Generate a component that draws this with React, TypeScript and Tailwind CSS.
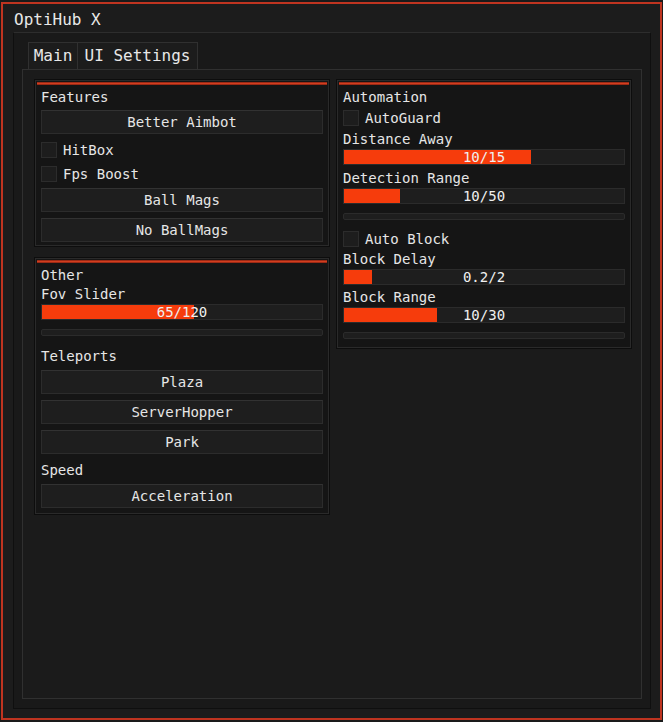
import React from "react";

const font = { fontFamily: '"DejaVu Sans Mono", "Liberation Mono", monospace' };

function Panel({ children, pb = "pb-[3px]" }: { children: React.ReactNode; pb?: string }) {
  return (
    <div className="flex flex-col border border-[#2a2a2a] bg-[#151515] outline outline-1 outline-[#0d0d0d]">
      <div className="mx-[1px] mt-[1px] h-[3px] bg-[#d23e1f] border-y border-[#9c2a16]" />
      <div className={"flex flex-col px-[5px] pt-[3px] " + pb}>{children}</div>
    </div>
  );
}

function Label({ text, className = "" }: { text: string; className?: string }) {
  return (
    <div className={"h-[18px] leading-[18px] text-[14px] text-[#e6e6e6] " + className}>{text}</div>
  );
}

function Button({ text, className = "" }: { text: string; className?: string }) {
  return (
    <div
      className={
        "h-[24px] flex items-center justify-center bg-[#1e1e1e] border border-[#2c2c2c] border-t-[#323232] text-[14px] text-[#e6e6e6] " +
        className
      }
    >
      {text}
    </div>
  );
}

function Check({ text, className = "" }: { text: string; className?: string }) {
  return (
    <div className={"h-[22px] flex items-center gap-[6px] " + className}>
      <div className="w-[16px] h-[16px] bg-[#1d1d1d] border border-[#2c2c2c]" />
      <span className="text-[14px] text-[#e6e6e6]">{text}</span>
    </div>
  );
}

function Slider({ value, max, text, className = "" }: { value: number; max: number; text: string; className?: string }) {
  const pct = (value / max) * 100;
  return (
    <div className={"relative h-[16px] bg-[#1e1e1e] border border-[#2b2b2b] " + className}>
      <div className="absolute left-0 top-0 bottom-0 bg-[#f63c0c]" style={{ width: pct + "%" }} />
      <div className="absolute inset-0 flex items-center justify-center text-[14px] leading-none text-[#f0f0f0]">
        {text}
      </div>
    </div>
  );
}

function Bar({ className = "" }: { className?: string }) {
  return <div className={"h-[7px] bg-[#1e1e1e] border border-[#2b2b2b] rounded-[2px] " + className} />;
}

export default function App() {
  return (
    <div className="w-[663px] h-[722px] bg-[#1a1a1a] pl-[1px] pt-[2px]" style={font}>
      <div className="w-[661px] h-[718px] border-2 border-[#bf3420] bg-[#1c1c1c] flex flex-col">
        <div className="h-[28px] flex items-center pl-[11px] pt-[3px] text-[16px] text-[#e8e8e8]">OptiHub X</div>
        <div className="ml-[10px] w-[638px] h-[677px] border border-[#0f0f0f] border-t-[#2d2d2d] bg-[#191919] flex flex-col">
          <div className="flex pl-[14px] pt-[9px]">
            <div className="h-[27px] w-[50px] flex items-center justify-center bg-[#1c1c1c] border border-[#303030] border-b-0 text-[16px] text-[#e8e8e8]">
              Main
            </div>
            <div className="h-[27px] w-[120px] flex items-center justify-center bg-[#1c1c1c] border border-[#303030] border-b-0 border-l-0 text-[16px] text-[#e8e8e8]">
              UI Settings
            </div>
          </div>
          <div className="ml-[8px] w-[620px] h-[630px] border border-[#303030] bg-[#1b1b1b] pl-[12px] pt-[10px]">
            <div className="grid grid-cols-[294px_294px] gap-x-[8px] items-start">
              <div className="flex flex-col gap-[12px]">
                <Panel>
                  <Label text="Features" />
                  <Button text="Better Aimbot" className="mt-[4px]" />
                  <Check text="HitBox" className="mt-[5px]" />
                  <Check text="Fps Boost" className="mt-[2px]" />
                  <Button text="Ball Mags" className="mt-[3px]" />
                  <Button text="No BallMags" className="mt-[6px]" />
                </Panel>
                <Panel pb="pb-[5px]">
                  <Label text="Other" />
                  <Label text="Fov Slider" className="mt-[1px]" />
                  <Slider value={65} max={120} text="65/120" className="mt-[1px]" />
                  <Bar className="mt-[9px]" />
                  <Label text="Teleports" className="mt-[11px]" />
                  <Button text="Plaza" className="mt-[5px]" />
                  <Button text="ServerHopper" className="mt-[6px]" />
                  <Button text="Park" className="mt-[6px]" />
                  <Label text="Speed" className="mt-[7px]" />
                  <Button text="Acceleration" className="mt-[5px]" />
                </Panel>
              </div>
              <Panel>
                <Label text="Automation" />
                <Check text="AutoGuard" className="mt-[1px]" />
                <Label text="Distance Away" className="mt-[1px]" />
                <Slider value={10} max={15} text="10/15" className="mt-[1px]" />
                <Label text="Detection Range" className="mt-[4px]" />
                <Slider value={10} max={50} text="10/50" className="mt-[1px]" />
                <Bar className="mt-[9px]" />
                <Check text="Auto Block" className="mt-[8px]" />
                <Label text="Block Delay" className="mt-[0px]" />
                <Slider value={0.2} max={2} text="0.2/2" className="mt-[1px]" />
                <Label text="Block Range" className="mt-[3px]" />
                <Slider value={10} max={30} text="10/30" className="mt-[1px]" />
                <Bar className="mt-[9px]" />
                <div className="h-[5px]" />
              </Panel>
            </div>
          </div>
        </div>
      </div>
    </div>
  );
}
